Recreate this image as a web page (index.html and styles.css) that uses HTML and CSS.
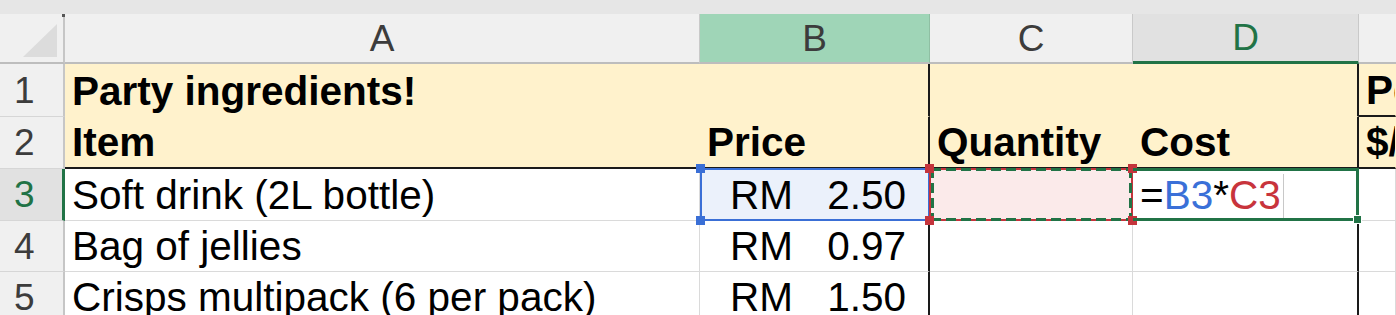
FILE: index.html
```html
<!DOCTYPE html>
<html lang="en">
<head>
    <meta charset="UTF-8">
    <title>Party ingredients</title>
    <link rel="stylesheet" href="styles.css">
</head>
<body>

<div class="topbar"></div>

<div class="sheet">
    <!-- column headers -->
    <div class="corner"><div class="corner-tri"></div><span class="corner-dot"></span></div>
    <div class="colhead">A</div>
    <div class="colhead colhead-ref">B</div>
    <div class="colhead">C</div>
    <div class="colhead colhead-active">D</div>
    <div class="colhead colhead-last"></div>

    <!-- row 1 -->
    <div class="rowhead">1</div>
    <div class="cell fill bold">Party ingredients!</div>
    <div class="cell fill edge-r"></div>
    <div class="cell fill"></div>
    <div class="cell fill edge-r"></div>
    <div class="cell fill bold edge-b clip">Per person</div>

    <!-- row 2 -->
    <div class="rowhead">2</div>
    <div class="cell fill bold edge-b">Item</div>
    <div class="cell fill bold edge-b edge-r">Price</div>
    <div class="cell fill bold edge-b">Quantity</div>
    <div class="cell fill bold edge-b edge-r">Cost</div>
    <div class="cell fill bold edge-b clip">$/person</div>

    <!-- row 3 -->
    <div class="rowhead rowhead-active">3</div>
    <div class="cell">Soft drink (2L bottle)</div>
    <div class="cell money edge-r ref-blue-cell">
        <span>RM</span><span>2.50</span>
        <div class="ref ref-blue">
            <i class="knob tl"></i><i class="knob bl"></i>
        </div>
    </div>
    <div class="cell ref-red-cell">
        <div class="ref ref-red">
            <i class="knob tl"></i><i class="knob tr"></i><i class="knob bl"></i><i class="knob br"></i>
        </div>
    </div>
    <div class="cell edge-r">
        <span class="formula">=<span class="f-blue">B3</span>*<span class="f-red">C3</span></span><span class="caret"></span>
        <div class="active-box"><i class="fill-handle"></i></div>
    </div>
    <div class="cell"></div>

    <!-- row 4 -->
    <div class="rowhead">4</div>
    <div class="cell">Bag of jellies</div>
    <div class="cell money edge-r"><span>RM</span><span>0.97</span></div>
    <div class="cell"></div>
    <div class="cell edge-r"></div>
    <div class="cell"></div>

    <!-- row 5 -->
    <div class="rowhead">5</div>
    <div class="cell">Crisps multipack (6 per pack)</div>
    <div class="cell money edge-r"><span>RM</span><span>1.50</span></div>
    <div class="cell"></div>
    <div class="cell edge-r"></div>
    <div class="cell"></div>
</div>

</body>
</html>
```

FILE: styles.css
```css
* {
    box-sizing: border-box;
}
body {
    margin: 0;
    background: #ffffff;
    font-family: 'Liberation Sans', Arial, sans-serif;
    overflow: hidden;
}
.topbar {
    height: 14px;
    background: #e6e6e6;
}
.sheet {
    display: grid;
    grid-template-columns: 65px 635px 230px 203px 226px 1fr;
    grid-template-rows: 50px 53px 52px 52px 51px 51px;
}

/* headers */
.corner {
    position: relative;
    background: #f0f0f0;
    border-right: 2px solid #c6c6c6;
    border-bottom: 2px solid #bdbdbd;
}
.corner-tri {
    position: absolute;
    left: 23px;
    top: 10px;
    width: 34px;
    height: 33px;
    background: #dcdcdc;
    clip-path: polygon(100% 0, 100% 100%, 0 100%);
}
.corner-dot {
    position: absolute;
    right: -2px;
    top: 0;
    width: 3px;
    height: 3px;
    background: #555;
}
.colhead {
    display: flex;
    justify-content: center;
    align-items: flex-end;
    padding-bottom: 5px;
    background: #f0f0f0;
    border-right: 1px solid #c9c9c9;
    border-bottom: 2px solid #bdbdbd;
    color: #3c3c3c;
    font-size: 37px;
    line-height: 1;
}
.colhead-ref {
    background: #9fd5b7;
    border-right-color: #8fbfa3;
}
.colhead-active {
    background: #e1e1e1;
    color: #217346;
    border-bottom: 3px solid #217346;
}
.colhead-last {
    border-right: none;
}
.rowhead {
    display: flex;
    align-items: center;
    padding-left: 14px;
    background: #f0f0f0;
    border-right: 2px solid #c6c6c6;
    border-bottom: 1px solid #d6d6d6;
    color: #3c3c3c;
    font-size: 37px;
    line-height: 1;
}
.rowhead-active {
    background: #e1e1e1;
    color: #217346;
    border-right: 3px solid #217346;
}

/* cells */
.cell {
    position: relative;
    display: flex;
    align-items: flex-end;
    padding: 0 6px 5px 7px;
    border-right: 1px solid #dadada;
    border-bottom: 1px solid #dadada;
    color: #000;
    font-size: 40.5px;
    line-height: 1;
    white-space: nowrap;
}
.fill {
    background: #fff2cc;
    border-color: #fff2cc;
}
.bold {
    font-weight: bold;
}
.edge-r {
    border-right: 2px solid #1a1a1a;
}
.edge-b {
    border-bottom: 2px solid #1a1a1a;
}
.clip {
    overflow: hidden;
}
.money {
    justify-content: space-between;
    padding-left: 30px;
    padding-right: 22px;
}

/* formula reference highlights */
.ref-blue-cell {
    background: #ebf1fb;
}
.ref-red-cell {
    background: #fbeaea;
}
.ref {
    position: absolute;
    z-index: 2;
    top: -1px;
    left: 0;
    right: -2px;
    bottom: -1px;
}
.ref-blue {
    border: 2px solid #3a6fd6;
}
.ref-red {
    left: -1px;
    right: -1px;
    border: 2px solid #c4343c;
}
/* green copy marquee drawn over the red border */
.ref-red::before {
    content: "";
    position: absolute;
    inset: -2px -1px -2px 0;
    background:
        repeating-linear-gradient(90deg, #217346 0 10px, transparent 10px 15px) top / 100% 3px no-repeat,
        repeating-linear-gradient(90deg, #217346 0 10px, transparent 10px 15px) bottom / 100% 3px no-repeat,
        repeating-linear-gradient(180deg, #217346 0 10px, transparent 10px 15px) left / 3px 100% no-repeat,
        repeating-linear-gradient(180deg, #217346 0 10px, transparent 10px 15px) right / 3px 100% no-repeat;
}
.knob {
    position: absolute;
    z-index: 1;
    width: 9px;
    height: 9px;
}
.ref-red .knob {
    background: #c4343c;
}
.ref-blue .knob {
    background: #3a6fd6;
}
.knob.tl { left: -6px; top: -6px; }
.knob.tr { right: -6px; top: -6px; }
.knob.bl { left: -6px; bottom: -6px; }
.knob.br { right: -6px; bottom: -6px; }

/* active cell D3 */
.formula {
    color: #000;
}
.f-blue {
    color: #3a70d8;
}
.f-red {
    color: #c8343c;
}
.caret {
    align-self: center;
    width: 1px;
    height: 44px;
    margin-left: 2px;
    margin-bottom: -8px;
    background: #c8c8c8;
}
.active-box {
    position: absolute;
    z-index: 2;
    top: -1px;
    left: 0;
    right: -2px;
    bottom: -1px;
    border: 3px solid #217346;
    border-left: none;
}
.fill-handle {
    position: absolute;
    right: -6px;
    bottom: -6px;
    width: 9px;
    height: 9px;
    background: #217346;
    border: 1px solid #ffffff;
}
```
